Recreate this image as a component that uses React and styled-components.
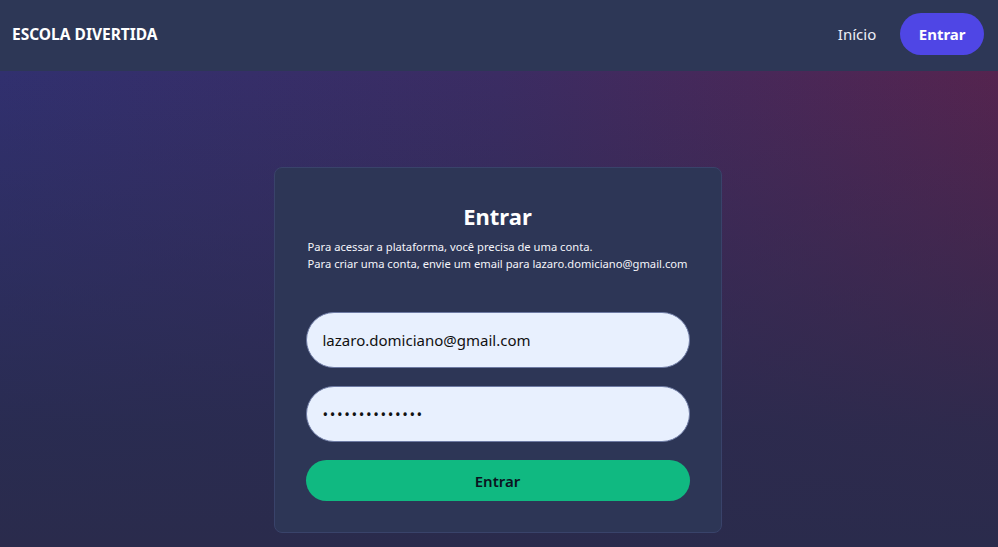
import React, { useState } from 'react';
import styled, { createGlobalStyle } from 'styled-components';

const GlobalStyle = createGlobalStyle`
  * { box-sizing: border-box; }
  body {
    margin: 0;
    font-family: 'Noto Sans', 'Open Sans', sans-serif;
    background: #272c4f;
  }
`

const Page = styled.div`
  min-height: 100vh;
  display: flex;
  flex-direction: column;
`

const NavBar = styled.nav`
  height: 71px;
  display: flex;
  align-items: center;
  justify-content: space-between;
  padding: 0 14px 3px 12px;
  background: #2d3756;
`

const Logo = styled.span`
  color: #ffffff;
  font-weight: 700;
  font-size: 15.5px;
`

const NavLinks = styled.div`
  display: flex;
  align-items: center;
  gap: 24px;
`

const NavLink = styled.a`
  color: #eef0f6;
  font-size: 15px;
  text-decoration: none;
`

const PillButton = styled.button`
  border: 0;
  border-radius: 999px;
  cursor: pointer;
  font-family: inherit;
  font-size: 15px;
  height: ${props => props.tall ? '42px' : '41px'};
  padding: 0 18.5px;
  color: ${props => props.variant === 'green' ? '#0b1320' : '#ffffff'};
  background: ${props => props.variant === 'green' ? '#10b981' : '#4f46e5'};
  width: ${props => props.block ? '100%' : 'auto'};
  font-weight: ${props => props.variant === 'green' ? 600 : 700};
`

const Main = styled.main`
  flex: 1;
  display: flex;
  justify-content: center;
  align-items: flex-start;
  padding: 96px 3px 0 0;
  background:
    linear-gradient(to bottom, rgba(39, 44, 78, 0) 0%, rgba(40, 43, 76, 0.85) 75%, #2a2b4c 100%),
    linear-gradient(to right, #31306f 0%, #3b2c63 50%, #55244f 100%);
`

const Card = styled.section`
  width: 448px;
  background: #2d3656;
  border: 1px solid #39436a;
  border-radius: 8px;
  padding: 32px 31px 31px 31px;
  display: flex;
  flex-direction: column;
`

const Title = styled.h1`
  margin: 0;
  text-align: center;
  color: #ffffff;
  font-size: 22px;
  font-weight: 700;
  line-height: 32px;
`

const Info = styled.p`
  margin: 6px 0 0 2px;
  color: #f4f5fa;
  font-size: 11.2px;
  line-height: 17px;
`

const Form = styled.form`
  margin-top: 40px;
  display: flex;
  flex-direction: column;
  gap: 18px;
`

const Field = styled.input`
  width: 100%;
  height: 56px;
  border-radius: 999px;
  border: 1px solid #6d7aa3;
  background: #e8f0fe;
  padding: 0 16px;
  font-family: inherit;
  font-size: 15px;
  color: #111111;
  outline: none;
  letter-spacing: ${props => props.type === 'password' ? '1.6px' : '0'};
`

export default function App() {
  const [email, setEmail] = useState('lazaro.domiciano@gmail.com');
  const [password, setPassword] = useState('12345678901234');

  return (
    <Page>
      <GlobalStyle />
      <NavBar>
        <Logo>ESCOLA DIVERTIDA</Logo>
        <NavLinks>
          <NavLink href="#">Início</NavLink>
          <PillButton tall>Entrar</PillButton>
        </NavLinks>
      </NavBar>
      <Main>
        <Card>
          <Title>Entrar</Title>
          <Info>
            Para acessar a plataforma, você precisa de uma conta.<br />
            Para criar uma conta, envie um email para lazaro.domiciano@gmail.com
          </Info>
          <Form onSubmit={e => e.preventDefault()}>
            <Field type="email" value={email} onChange={e => setEmail(e.target.value)} />
            <Field type="password" value={password} onChange={e => setPassword(e.target.value)} />
            <PillButton variant="green" block type="submit">Entrar</PillButton>
          </Form>
        </Card>
      </Main>
    </Page>
  );
}
